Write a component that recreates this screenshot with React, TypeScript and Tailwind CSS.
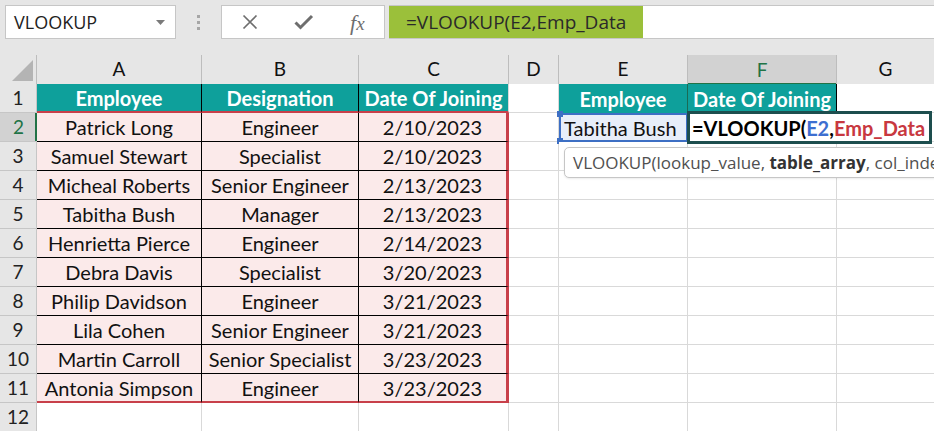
import React from "react";

const cellFont = { fontFamily: "Lato, 'Liberation Sans', sans-serif" };

const data = [
  ["Patrick Long", "Engineer", "2/10/2023"],
  ["Samuel Stewart", "Specialist", "2/10/2023"],
  ["Micheal Roberts", "Senior Engineer", "2/13/2023"],
  ["Tabitha Bush", "Manager", "2/13/2023"],
  ["Henrietta Pierce", "Engineer", "2/14/2023"],
  ["Debra Davis", "Specialist", "3/20/2023"],
  ["Philip Davidson", "Engineer", "3/21/2023"],
  ["Lila Cohen", "Senior Engineer", "3/21/2023"],
  ["Martin Carroll", "Senior Specialist", "3/23/2023"],
  ["Antonia Simpson", "Engineer", "3/23/2023"],
];

const cols = "grid grid-cols-[37px_165px_157px_150px_50px_129px_149px_97px]";

function RowHeader({ n, selected }: { n: number; selected?: boolean }) {
  return (
    <div
      className={
        selected
          ? "h-[29px] flex items-center justify-center bg-[#d2d2d2] text-[#217346] border-b border-[#c6c6c6] shadow-[inset_-2px_0_0_#217346] text-[19px]"
          : "h-[29px] flex items-center justify-center bg-[#e6e6e6] text-[#222] border-b border-r border-[#c6c6c6] text-[19px]"
      }
    >
      {n}
    </div>
  );
}

function Blank({ last }: { last?: boolean }) {
  return (
    <div
      className={
        last
          ? "h-[29px] bg-white border-b border-[#d9d9d9]"
          : "h-[29px] bg-white border-b border-r border-[#d9d9d9]"
      }
    />
  );
}

export default function App() {
  return (
    <div className="w-[934px] h-[431px] overflow-hidden bg-white select-none" style={cellFont}>
      {/* toolbar */}
      <div className="h-[55px] bg-[#e6e6e6] pt-[5px] flex items-start" style={{ fontFamily: "'Open Sans', 'Noto Sans', sans-serif" }}>
        <div className="ml-[5px] w-[171px] h-[34px] bg-white border border-[#c6c6c6] flex items-center justify-between pl-[8px] pr-[10px]">
          <span className="text-[18px] text-[#222]">VLOOKUP</span>
          <svg width="9" height="5" viewBox="0 0 9 5">
            <path d="M0 0 L9 0 L4.5 5 Z" fill="#7a7a7a" />
          </svg>
        </div>
        <div className="w-[45px] h-[34px] flex flex-col items-center justify-center gap-[3px]">
          <div className="w-[3px] h-[3px] bg-[#a6a6a6]" />
          <div className="w-[3px] h-[3px] bg-[#a6a6a6]" />
          <div className="w-[3px] h-[3px] bg-[#a6a6a6]" />
        </div>
        <div className="w-[164px] h-[34px] bg-white border border-[#c6c6c6] flex items-center">
          <div className="w-[55px] flex justify-center pl-[2px]">
            <svg width="16" height="16" viewBox="0 0 16 16">
              <path d="M1.5 1.5 L14.5 14.5 M14.5 1.5 L1.5 14.5" stroke="#6e6e6e" strokeWidth="1.7" />
            </svg>
          </div>
          <div className="w-[55px] flex justify-center">
            <svg width="20" height="16" viewBox="0 0 20 16">
              <path d="M1.5 8.5 L6.5 13.5 L18 2" stroke="#6e6e6e" strokeWidth="3" fill="none" />
            </svg>
          </div>
          <div className="w-[54px] flex justify-center">
            <span className="text-[#6e6e6e] text-[22px] italic" style={{ fontFamily: "'Liberation Serif', serif" }}>
              f<span className="text-[19px]">x</span>
            </span>
          </div>
        </div>
        <div className="ml-[4px] flex-1 h-[34px] bg-white border-y border-[#c6c6c6] flex">
          <div className="w-[254px] h-full bg-[#9bc03a] flex items-center pl-[17px]">
            <span className="text-[19px] text-[#2a2a2a]">=VLOOKUP(E2,Emp_Data</span>
          </div>
        </div>
      </div>

      {/* column headers */}
      <div className={cols + " h-[29px]"}>
        <div className="bg-[#e6e6e6] border-r border-b border-[#bdbdbd] flex items-end justify-end pr-[3px] pb-[3px]">
          <svg width="21" height="21" viewBox="0 0 21 21">
            <path d="M21 0 L21 21 L0 21 Z" fill="#b4b4b4" />
          </svg>
        </div>
        {["A", "B", "C", "D", "E"].map((c) => (
          <div key={c} className="bg-[#e6e6e6] border-r border-b border-[#bdbdbd] flex items-center justify-center text-[19px] text-[#111]">
            {c}
          </div>
        ))}
        <div className="bg-[#d2d2d2] border-r border-[#bdbdbd] shadow-[inset_0_-2px_0_#217346] flex items-center justify-center text-[19px] text-[#217346]">
          F
        </div>
        <div className="bg-[#e6e6e6] border-b border-[#bdbdbd] flex items-center justify-center text-[19px] text-[#111]">
          G
        </div>
      </div>

      {/* row 1 */}
      <div className={cols}>
        <RowHeader n={1} />
        <div className="h-[29px] bg-[#0ea09b] border-r border-black border-b-2 border-b-[#c8404a] flex items-center justify-center text-white font-bold text-[20px]">Employee</div>
        <div className="h-[29px] bg-[#0ea09b] border-r border-black border-b-2 border-b-[#c8404a] flex items-center justify-center text-white font-bold text-[20px]">Designation</div>
        <div className="h-[29px] bg-[#0ea09b] border-r border-[#d9d9d9] border-b-2 border-b-[#c8404a] flex items-center justify-center text-white font-bold text-[20px] whitespace-nowrap">Date Of Joining</div>
        <div className="h-[29px] bg-white border-r border-b border-[#d9d9d9]" />
        <div className="h-[29px] bg-[#0ea09b] border-r border-[#1a6b55] flex items-center justify-center text-white font-bold text-[20px]">Employee</div>
        <div className="h-[29px] bg-[#0ea09b] border-r border-black flex items-center justify-center text-white font-bold text-[20px] whitespace-nowrap">Date Of Joining</div>
        <Blank last />
      </div>

      {/* data rows */}
      {data.map((r, i) => {
        const last = i === data.length - 1;
        const rowNum = i + 2;
        return (
          <div key={i} className={cols}>
            <RowHeader n={rowNum} selected={rowNum === 2} />
            <div
              className={
                last
                  ? "h-[29px] bg-[#fbeaea] border-r border-black border-b-2 border-b-[#c8404a] flex items-center justify-center text-[20px] text-[#111] whitespace-nowrap"
                  : "h-[29px] bg-[#fbeaea] border-r border-b border-black flex items-center justify-center text-[20px] text-[#111] whitespace-nowrap"
              }
            >
              {r[0]}
            </div>
            <div
              className={
                last
                  ? "h-[29px] bg-[#fbeaea] border-r border-black border-b-2 border-b-[#c8404a] flex items-center justify-center text-[20px] text-[#111] whitespace-nowrap"
                  : "h-[29px] bg-[#fbeaea] border-r border-b border-black flex items-center justify-center text-[20px] text-[#111] whitespace-nowrap"
              }
            >
              {r[1]}
            </div>
            <div
              className={
                last
                  ? "h-[29px] bg-[#fbeaea] border-r-[3px] border-r-[#c8404a] border-b-2 border-b-[#c8404a] flex items-center justify-center text-[20px] text-[#111]"
                  : "h-[29px] bg-[#fbeaea] border-r-[3px] border-r-[#c8404a] border-b border-b-black flex items-center justify-center text-[20px] text-[#111]"
              }
            >
              {r[2]}
            </div>
            <Blank />
            {rowNum === 2 ? (
              <>
                <div className="relative h-[29px] bg-[#e8eef9] border-2 border-[#3d6fc4] flex items-center pl-[3px] text-[20px] text-[#111] whitespace-nowrap">
                  Tabitha Bush
                  <div className="absolute left-[-4px] top-[-4px] w-[6px] h-[6px] bg-[#3d6fc4]" />
                  <div className="absolute left-[-4px] bottom-[-4px] w-[6px] h-[6px] bg-[#3d6fc4]" />
                </div>
                <div className="relative h-[29px] bg-white">
                  <div className="absolute left-[-1px] top-[-2px] w-[245px] h-[33px] bg-white border-[3px] border-[#1d4e4e] flex items-center pl-[2px] text-[20px] font-bold whitespace-nowrap z-10">
                    <span className="text-black">=VLOOKUP(</span>
                    <span className="text-[#3d6fd0]">E2</span>
                    <span className="text-black">,</span>
                    <span className="text-[#c8383f]">Emp_Data</span>
                  </div>
                </div>
                <Blank last />
              </>
            ) : rowNum === 3 ? (
              <>
                <div className="relative h-[29px] bg-white border-r border-b border-[#d9d9d9]">
                  <div
                    className="absolute left-[5px] top-[5px] w-[380px] h-[31px] bg-white border border-[#c6c6c6] rounded-[5px] flex items-center pl-[8px] text-[17px] text-[#505050] whitespace-nowrap z-10 shadow-[0_1px_2px_rgba(0,0,0,0.08)] overflow-hidden"
                    style={{ fontFamily: "'Open Sans', 'Noto Sans', sans-serif" }}
                  >
                    VLOOKUP(lookup_value,&nbsp;<b className="text-[#333]">table_array</b>, col_inde
                  </div>
                </div>
                <Blank />
                <Blank last />
              </>
            ) : (
              <>
                <Blank />
                <Blank />
                <Blank last />
              </>
            )}
          </div>
        );
      })}

      {/* row 12 */}
      <div className={cols}>
        <RowHeader n={12} />
        <Blank />
        <Blank />
        <Blank />
        <Blank />
        <Blank />
        <Blank />
        <Blank last />
      </div>
    </div>
  );
}
